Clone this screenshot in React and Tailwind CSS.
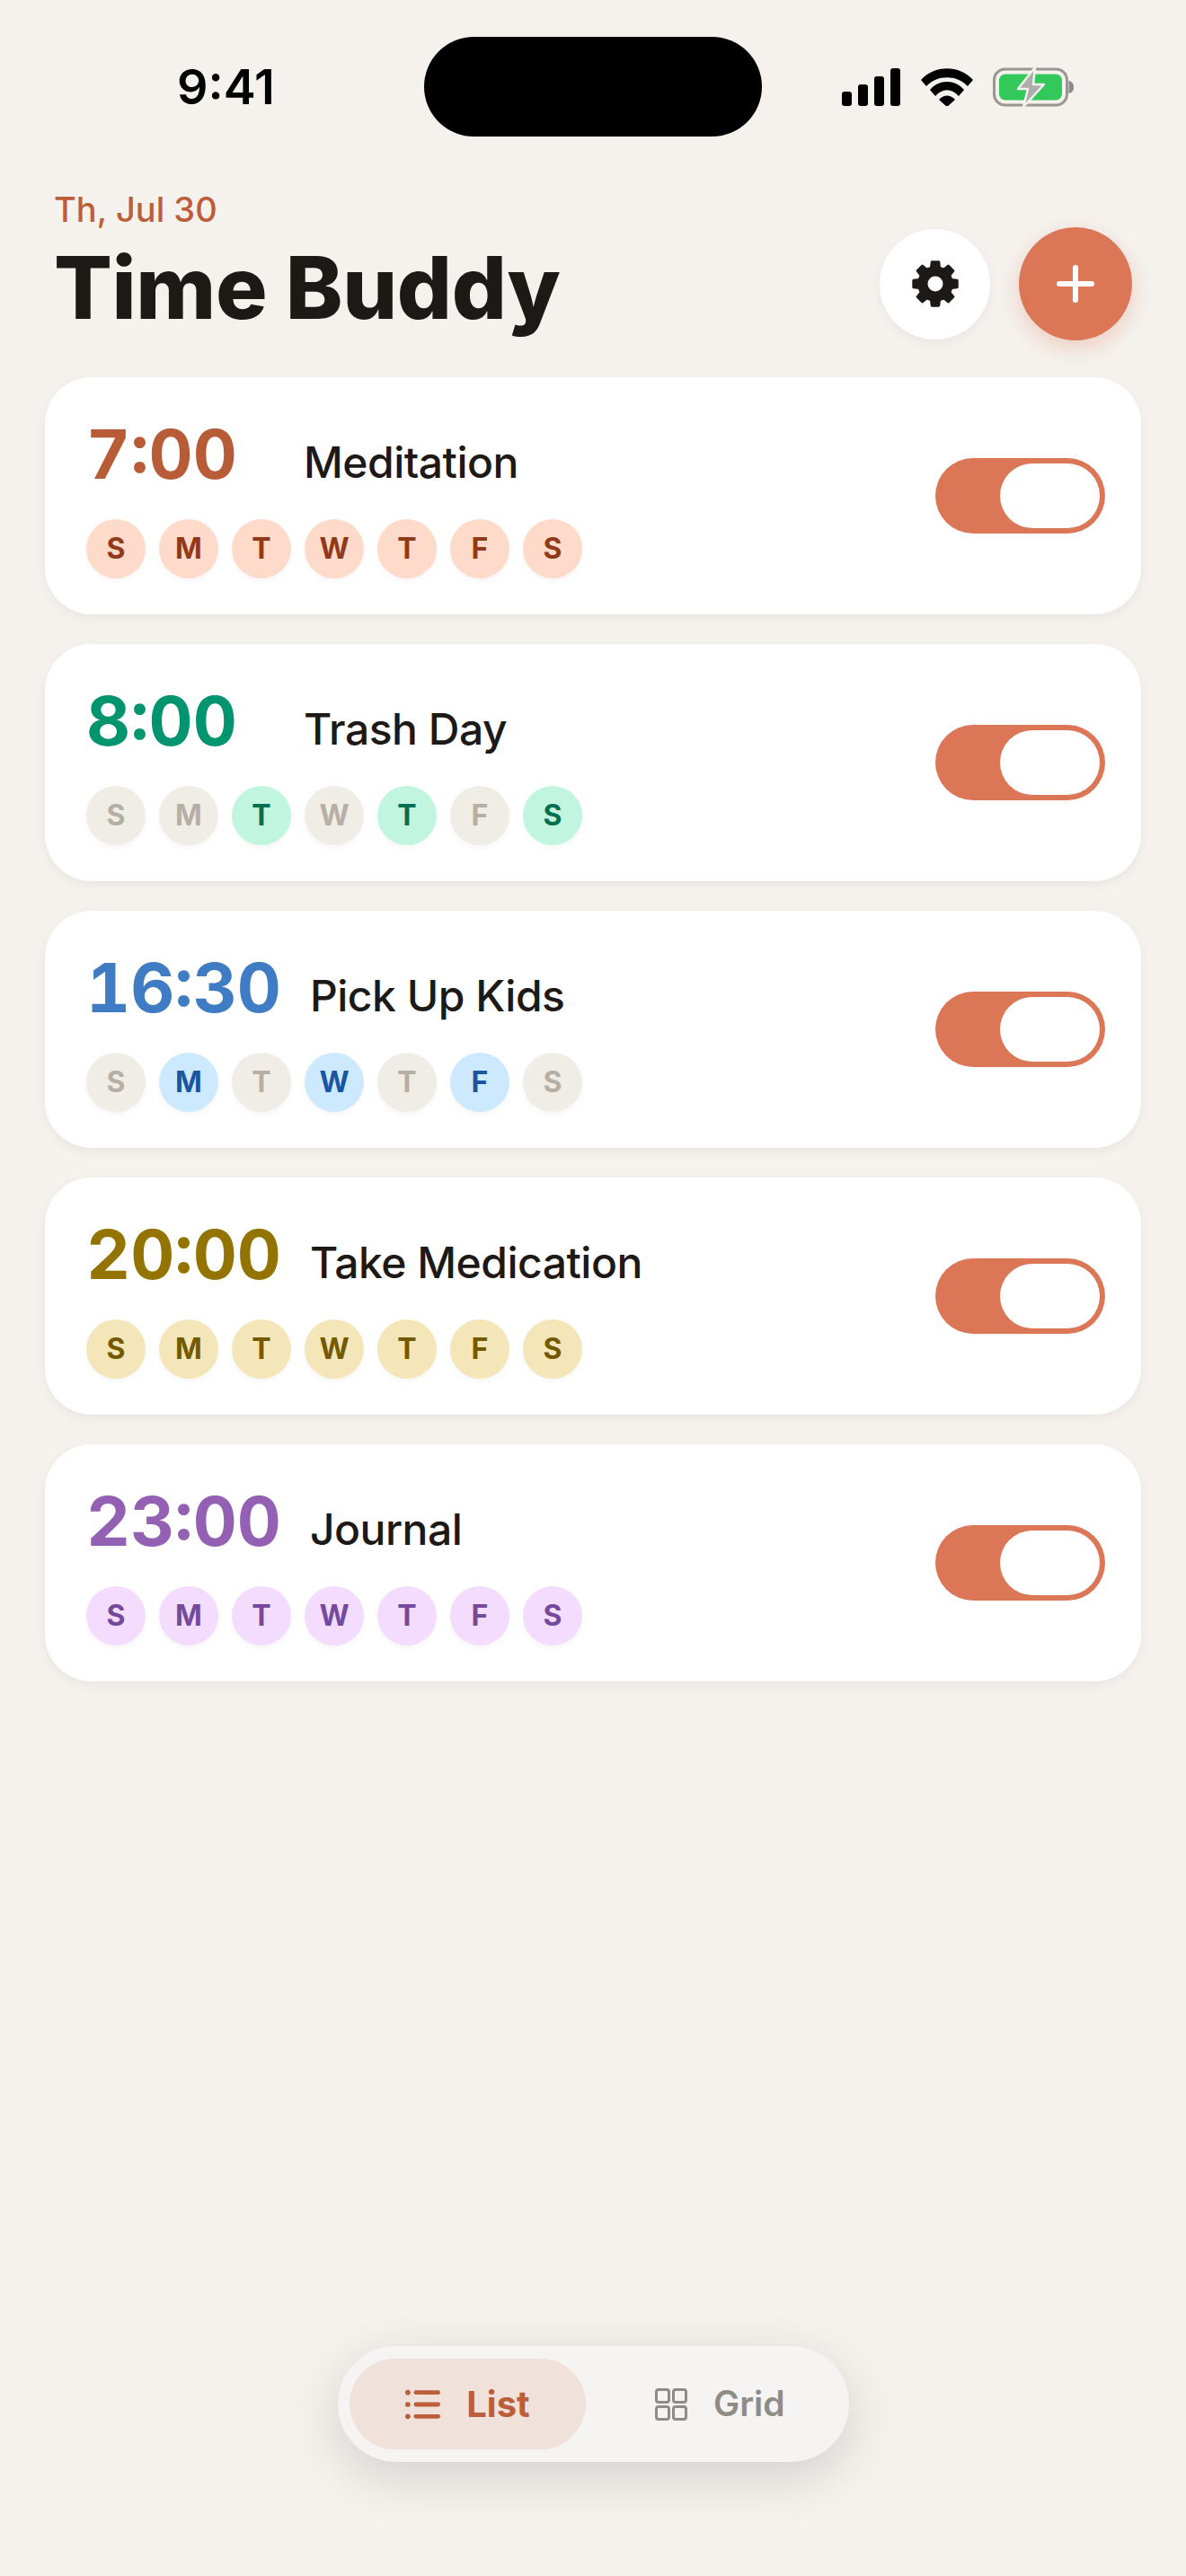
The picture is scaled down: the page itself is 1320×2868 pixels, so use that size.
import React from "react";

const DAYS = ["S", "M", "T", "W", "T", "F", "S"];

const ALARMS = [
  { time: "7:00", name: "Meditation", color: "text-[#b85c38]", chip: "bg-[#fedaca] text-[#92391a]", on: [0, 1, 2, 3, 4, 5, 6] },
  { time: "8:00", name: "Trash Day", color: "text-[#00956f]", chip: "bg-[#c1f5e0] text-[#05704f]", on: [2, 4, 6] },
  { time: "16:30", name: "Pick Up Kids", color: "text-[#3f7cc4]", chip: "bg-[#cde9fe] text-[#1a56a0]", on: [1, 3, 5] },
  { time: "20:00", name: "Take Medication", color: "text-[#937400]", chip: "bg-[#f4e6b8] text-[#735a00]", on: [0, 1, 2, 3, 4, 5, 6] },
  { time: "23:00", name: "Journal", color: "text-[#9460b4]", chip: "bg-[#f3dcfd] text-[#734a9c]", on: [0, 1, 2, 3, 4, 5, 6] },
];

// 8 tooth gear outline, rounded off by the stroke
const GEAR_POINTS = Array.from({ length: 8 }, (_, i) => {
  const a = i * 45 - 90;
  const pt = (deg, r) => {
    const rad = ((a + deg) * Math.PI) / 180;
    return `${(26 + r * Math.cos(rad)).toFixed(2)},${(26 + r * Math.sin(rad)).toFixed(2)}`;
  };
  return [pt(-14, 18.5), pt(-9, 24.5), pt(9, 24.5), pt(14, 18.5)].join(" ");
}).join(" ");

function StatusIcons() {
  return (
    <div className="flex items-center gap-[22px]">
      <svg width="66" height="42" viewBox="0 0 66 42" fill="#000">
        <rect x="0" y="26" width="11" height="16" rx="3" />
        <rect x="18" y="18" width="11" height="24" rx="3" />
        <rect x="36" y="9" width="11" height="33" rx="3" />
        <rect x="54" y="0" width="11" height="42" rx="3" />
      </svg>
      <svg width="58" height="42" viewBox="0 0 58 42" fill="#000">
        <path d="M0 13 C15 -4 43 -4 58 13 L52 20 C40 7 18 7 6 20 Z" />
        <path d="M10 24 C20 12 38 12 48 24 L42 31 C34 22 24 22 16 31 Z" />
        <path d="M20 35 C25 29 33 29 38 35 L29 43 Z" />
      </svg>
      <svg width="94" height="44" viewBox="0 0 94 44">
        <rect x="1.5" y="2" width="81" height="40" rx="12" fill="none" stroke="#979694" strokeWidth="3" />
        <rect x="7" y="7.5" width="70" height="29" rx="7" fill="#34c75a" />
        <path d="M84.5 15 C88 15.500 90 18 90 22 C90 26 88 28.500 84.500 29 Z" fill="#8a8a88" />
        <path d="M47 0 L28 24 L39 24 L34 44 L57 19 L45 19 Z" fill="#adadaa" stroke="#f5f2ee" strokeWidth="2.500" strokeLinejoin="round" />
      </svg>
    </div>
  );
}

function AlarmCard({ alarm }) {
  return (
    <div className="flex items-center justify-between h-[264px] pl-[46px] pr-[40px] bg-white rounded-[52px] shadow-[0_4px_12px_rgba(0,0,0,0.05)]">
      <div className="flex flex-col gap-[37px] pt-[8px]">
        <div className="flex items-end gap-8 h-[72px]">
          <span className={`min-w-[210px] text-[76px] leading-[72px] font-bold tabular-nums ${alarm.color}`}>{alarm.time}</span>
          <span className="text-[48px] leading-[52px] font-medium tracking-[-0.5px] text-[#1c1917]">{alarm.name}</span>
        </div>
        <div className="flex gap-[15px]">
          {DAYS.map((day, i) => (
            <span
              key={i}
              className={`flex items-center justify-center w-[66px] h-[66px] rounded-full text-[32px] font-bold shadow-[0_3px_6px_rgba(0,0,0,0.04)] ${
                alarm.on.includes(i) ? alarm.chip : "bg-[#f0ede7] text-[#b7afa5]"
              }`}
            >
              {day}
            </span>
          ))}
        </div>
      </div>
      <div className="flex justify-end items-center w-[189px] h-[84px] p-[6px] rounded-full bg-[#db7757]">
        <div className="w-[111px] h-[72px] rounded-full bg-white" />
      </div>
    </div>
  );
}

export default function App() {
  return (
    <div className="relative w-[1320px] h-[2868px] overflow-hidden bg-[#f5f2ee] font-['Inter',sans-serif]">
      {/* Status bar */}
      <div className="flex items-center h-[111px] mt-[41px] pl-[197px]">
        <span className="w-[275px] text-[54px] leading-none font-semibold text-black">9:41</span>
        <div className="w-[376px] h-[111px] rounded-[56px] bg-black" />
        <div className="ml-[89px]">
          <StatusIcons />
        </div>
      </div>

      {/* Header */}
      <div className="flex items-end justify-between mt-[60px] pl-[60px] pr-[60px]">
        <div className="flex flex-col">
          <span className="text-[38px] leading-[42px] font-medium text-[#bc5e3a]">Th, Jul 30</span>
          <span className="text-[96px] leading-[132px] font-extrabold tracking-[-0.4px] text-[#1c1917]">Time Buddy</span>
        </div>
        <div className="flex items-center gap-[32px] mb-[7px]">
          <button className="flex items-center justify-center w-[123px] h-[123px] rounded-full bg-white shadow-[0_4px_12px_rgba(0,0,0,0.05)]">
            <svg width="52" height="52" viewBox="0 0 52 52">
              <polygon points={GEAR_POINTS} fill="#1c1917" stroke="#1c1917" strokeWidth="3" strokeLinejoin="round" />
              <circle cx="26" cy="26" r="8.500" fill="#fff" />
            </svg>
          </button>
          <button className="flex items-center justify-center w-[126px] h-[126px] rounded-full bg-[#db7757] shadow-[0_8px_24px_rgba(219,119,87,0.3)]">
            <svg width="44" height="44" viewBox="0 0 44 44" stroke="#fff" strokeWidth="6" strokeLinecap="round">
              <path d="M22 4V40M4 22H40" />
            </svg>
          </button>
        </div>
      </div>

      {/* Alarm list */}
      <div className="flex flex-col gap-[33px] mt-[34px] ml-[50px] mr-[50px]">
        {ALARMS.map((alarm) => (
          <AlarmCard key={alarm.time} alarm={alarm} />
        ))}
      </div>

      {/* Floating tab bar */}
      <div className="absolute left-[376px] top-[2612px] flex items-center gap-[77px] w-[569px] h-[129px] pl-[13px] rounded-full bg-[#f5f4f3] shadow-[0_16px_56px_rgba(0,0,0,0.14)]">
        <div className="flex items-center justify-center gap-[28px] w-[263px] h-[101px] rounded-full bg-[#f1e1db]">
          <svg width="40" height="34" viewBox="0 0 42 34" fill="#bc5e3a">
            <circle cx="3" cy="3" r="3" />
            <circle cx="3" cy="17" r="3" />
            <circle cx="3" cy="31" r="3" />
            <rect x="10" y="0.500" width="31" height="5" rx="2.500" />
            <rect x="10" y="14.500" width="31" height="5" rx="2.500" />
            <rect x="10" y="28.500" width="31" height="5" rx="2.500" />
          </svg>
          <span className="text-[40px] font-bold text-[#bc5e3a]">List</span>
        </div>
        <div className="flex items-center gap-[29px]">
          <svg width="36" height="36" viewBox="0 0 36 36" fill="none" stroke="#8f8c86" strokeWidth="3">
            <rect x="1.500" y="1.500" width="14" height="14" rx="2.500" />
            <rect x="20.500" y="1.500" width="14" height="14" rx="2.500" />
            <rect x="1.500" y="20.500" width="14" height="14" rx="2.500" />
            <rect x="20.500" y="20.500" width="14" height="14" rx="2.500" />
          </svg>
          <span className="text-[39px] font-semibold text-[#8f8c86]">Grid</span>
        </div>
      </div>
    </div>
  );
}
